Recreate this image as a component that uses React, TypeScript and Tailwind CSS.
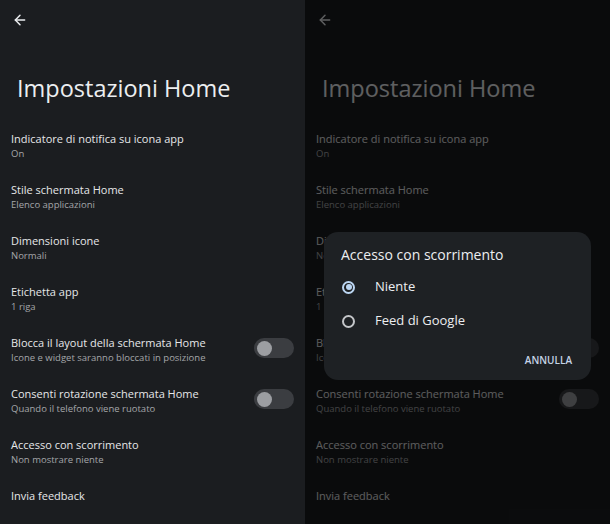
import { ArrowLeft } from 'lucide-react'

const rows = [
  { title: 'Indicatore di notifica su icona app', sub: 'On' },
  { title: 'Stile schermata Home', sub: 'Elenco applicazioni' },
  { title: 'Dimensioni icone', sub: 'Normali' },
  { title: 'Etichetta app', sub: '1 riga' },
  { title: 'Blocca il layout della schermata Home', sub: 'Icone e widget saranno bloccati in posizione', toggle: true },
  { title: 'Consenti rotazione schermata Home', sub: 'Quando il telefono viene ruotato', toggle: true },
  { title: 'Accesso con scorrimento', sub: 'Non mostrare niente' },
  { title: 'Invia feedback' },
]

function Toggle() {
  return (
    <div className="flex h-[20px] w-[40px] shrink-0 items-center rounded-full bg-[#3b3d41] px-[3px]">
      <div className="h-[15px] w-[15px] rounded-full bg-[#9c9ea2]" />
    </div>
  )
}

function Settings() {
  return (
    <div className="flex h-full flex-col bg-[#1b1d20]">
      <div className="pl-[12px] pt-[12px]">
        <ArrowLeft size={16} strokeWidth={2.2} className="text-[#eceef0]" />
      </div>
      <h1 className="mt-[45px] pl-[17px] text-[23.5px] leading-[30px] text-[#eceef0]">Impostazioni Home</h1>
      <div className="mt-[28px] flex flex-col">
        {rows.map((r, i) => (
          <div key={i} className="flex h-[51px] items-start justify-between pl-[11px] pr-[11px]">
            <div className="flex flex-col">
              <span className="text-[11px] leading-[16px] text-[#e6e7e9]">{r.title}</span>
              {r.sub && <span className="text-[9.5px] leading-[13px] text-[#a4a6a9]">{r.sub}</span>}
            </div>
            {r.toggle && (
              <div className="mt-[3px]">
                <Toggle />
              </div>
            )}
          </div>
        ))}
      </div>
    </div>
  )
}

function Radio({ checked, label }: { checked?: boolean; label: string }) {
  return (
    <div className="flex h-[34px] items-center">
      <div
        className={`flex h-[13px] w-[13px] items-center justify-center rounded-full border-2 ${
          checked ? 'border-[#bcd6f2]' : 'border-[#c4c6c9]'
        }`}
      >
        {checked && <div className="h-[6px] w-[6px] rounded-full bg-[#bcd6f2]" />}
      </div>
      <span className="ml-[20px] text-[13px] text-[#eceef0]">{label}</span>
    </div>
  )
}

export default function App() {
  return (
    <div className="flex h-[524px] w-[610px] font-['Open_Sans',sans-serif]">
      <div className="h-full w-[305px]">
        <Settings />
      </div>
      <div className="relative h-full w-[305px]">
        <Settings />
        <div className="absolute inset-0 bg-black/60" />
        <div className="absolute left-[19px] top-[232px] flex h-[148px] w-[267px] flex-col rounded-[14px] bg-[#1e2124] px-[17px] pt-[13px]">
          <span className="text-[14px] leading-[20px] text-[#eceef0]">Accesso con scorrimento</span>
          <div className="mt-[5px] flex flex-col pl-[1px]">
            <Radio checked label="Niente" />
            <Radio label="Feed di Google" />
          </div>
          <div className="mt-[15px] flex justify-end pr-[2px]">
            <span className="text-[10px] font-semibold text-[#c5d4e6]">ANNULLA</span>
          </div>
        </div>
      </div>
    </div>
  )
}
